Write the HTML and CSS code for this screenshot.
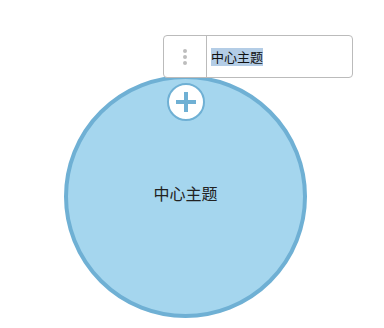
FILE: index.html
```html
<!DOCTYPE html>
<html lang="zh">
<head>
    <meta charset="UTF-8">
    <meta name="viewport" content="width=device-width, initial-scale=1.0">
    <title>中心主题</title>
    <link rel="stylesheet" href="styles.css">
</head>
<body>

    <!-- Mind map canvas -->
    <div class="canvas">

        <!-- Root node -->
        <div class="topic-root">
            <span class="topic-label">中心主题</span>
        </div>

        <!-- Add child button -->
        <button class="add-btn" title="添加">
            <svg width="22" height="22" viewBox="0 0 22 22">
                <path d="M11 1 V21 M1 11 H21" stroke="#6fb0d4" stroke-width="4" fill="none"/>
            </svg>
        </button>

        <!-- Inline editor -->
        <div class="topic-editor">
            <div class="drag-handle">
                <span class="dot"></span>
                <span class="dot"></span>
                <span class="dot"></span>
            </div>
            <div class="editor-field"><span class="selected">中心主题</span></div>
        </div>

    </div>

</body>
</html>
```

FILE: styles.css
```css
/* General Styles */
body {
    margin: 0;
    background: #fff;
    font-family: "Noto Sans CJK SC", "Liberation Sans", sans-serif;
}

.canvas {
    position: relative;
    width: 384px;
    height: 328px;
    overflow: hidden;
}

/* Root topic circle */
.topic-root {
    position: absolute;
    left: 64px;
    top: 75px;
    width: 243px;
    height: 243px;
    box-sizing: border-box;
    border: 4px solid #6fb0d4;
    border-radius: 50%;
    background-color: #a5d6ee;
    display: flex;
    justify-content: center;
    align-items: center;
    padding-bottom: 8px;
}

.topic-label {
    font-size: 16px;
    line-height: 18px;
    color: #222;
}

/* Add button */
.add-btn {
    position: absolute;
    left: 167px;
    top: 83px;
    width: 38px;
    height: 38px;
    box-sizing: border-box;
    padding: 0;
    border: 2px solid #6fb0d4;
    border-radius: 50%;
    background-color: #fff;
    display: flex;
    justify-content: center;
    align-items: center;
    cursor: pointer;
}

/* Editor overlay */
.topic-editor {
    position: absolute;
    left: 163px;
    top: 35px;
    width: 190px;
    height: 43px;
    box-sizing: border-box;
    border: 1px solid #bbb;
    border-radius: 4px;
    background-color: #fff;
    display: flex;
}

.drag-handle {
    width: 42px;
    border-right: 1px solid #bbb;
    display: flex;
    flex-direction: column;
    justify-content: center;
    align-items: center;
    gap: 2px;
}

.dot {
    width: 4px;
    height: 4px;
    border-radius: 50%;
    background-color: #bdbdbd;
}

.editor-field {
    flex: 1;
    display: flex;
    align-items: center;
    padding-left: 4px;
    font-size: 13px;
    color: #111;
}

.selected {
    background-color: #b4cde6;
    line-height: 18px;
}
```
